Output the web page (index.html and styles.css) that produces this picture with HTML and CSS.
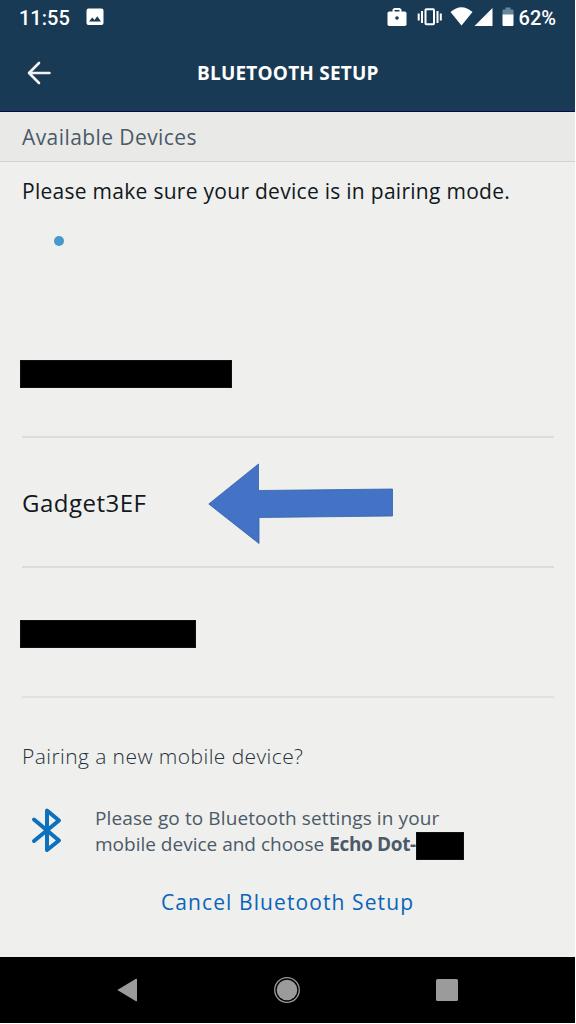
FILE: index.html
```html
<!DOCTYPE html>
<html lang="en">
<head>
<meta charset="utf-8">
<title>Bluetooth Setup</title>
<link rel="stylesheet" href="styles.css">
</head>
<body>
<div class="phone">
  <header class="header">
    <div class="status">
      <span class="clock">11:55</span>
      <svg class="photo" width="18" height="18" viewBox="0 0 18 18"><path fill="#fff" fill-rule="evenodd" d="M2.500.5h13q2 0 2 2v12.500q0 2-2 2h-13q-2 0-2-2V2.500q0-2 2-2zM3 13.500h12L11.300 8.300 8.500 12 6.200 9.600z"/></svg>
      <svg class="indicators" width="140" height="36" viewBox="378.5 0 140 36">
        <path class="stroke" d="M393 13V10l1-1h5l1 1v3"/>
        <rect x="387" y="11.500" width="19" height="14.500" rx="1.800"/>
        <circle cx="396.500" cy="18" r="1.800" fill="#183a54"/>
        <rect class="stroke" x="425" y="9.200" width="8.500" height="15" rx=".8"/>
        <path class="stroke" d="M421.500 11v12M437 11v12M418.200 13.500v7M440.300 13.500v7"/>
        <path d="M450 12q11-9.500 22 0L461 25.500z"/>
        <path d="M492 8v18h-18z"/>
        <path fill="#66869b" d="M502 15V10.500q0-1 1-1h2V7.500h5v2h2q1 0 1 1V15z"/>
        <path d="M502 14.500h11V25q0 1-1 1h-9q-1 0-1-1z"/>
      </svg>
      <span class="battery-text">62%</span>
    </div>
    <div class="titlebar">
      <svg class="back" width="24" height="24" viewBox="0 0 24 24"><path d="M22.500 12H2M12 2l-10 10 10 10"/></svg>
      <h1 class="title">BLUETOOTH SETUP</h1>
    </div>
  </header>
  <main class="content">
    <h2 class="section">Available Devices</h2>
    <p class="hint">Please make sure your device is in pairing mode.</p>
    <div class="loader"><span class="dot"></span></div>
    <div class="device"><span class="mask wide"></span></div>
    <div class="device"><span class="name">Gadget3EF</span>
      <svg class="arrow" width="186" height="82" viewBox="0 0 186 82"><path d="M.800 41 50.500 1v26.500L184.500 26v27L51 54.500V80.500z"/></svg>
    </div>
    <div class="device last"><span class="mask medium"></span></div>
    <p class="question">Pairing a new mobile device?</p>
    <div class="pairing">
      <svg class="bluetooth" width="32" height="46" viewBox="0 0 32 46"><path d="M3 12.500 28 33.500 16 43V3.500L28 13.500 3 34"/></svg>
      <p class="instruction"><span class="line">Please go to Bluetooth settings in your</span><span class="line second">mobile device and choose <b>Echo Dot-</b><span class="mask small"></span></span></p>
    </div>
    <a class="cancel">Cancel Bluetooth Setup</a>
  </main>
  <nav class="nav">
    <svg width="22" height="24" viewBox="0 0 22 24"><path d="M1.300 12 20 .800q1-.500 1 .500v21.400q0 1-1 .500z"/></svg>
    <svg width="28" height="28" viewBox="0 0 28 28"><circle cx="14" cy="14" r="10.300"/><circle class="ring" cx="14" cy="14" r="12.300"/></svg>
    <svg width="22" height="22" viewBox="0 0 22 22"><rect width="22" height="22" rx="1.500"/></svg>
  </nav>
</div>
</body>
</html>
```
FILE: styles.css
```css
* { box-sizing: border-box; }
body { margin: 0; background: #fff; font-family: "Open Sans", "Noto Sans", sans-serif; }
h1, h2, p { margin: 0; font-weight: 400; white-space: nowrap; }
svg { display: block; flex: none; }
.phone { width: 575px; height: 1023px; display: flex; flex-direction: column; }
.header { height: 112px; background: #183a54; border-bottom: 1px solid #060b48; color: #fff; }
.status { height: 36px; display: flex; align-items: center; padding: 0 19px; font: 500 20px Roboto, sans-serif; }
.photo { margin-left: 16px; margin-top: -2px; }
.indicators { margin-left: auto; fill: #fff; }
.indicators .stroke { fill: none; stroke: #fff; stroke-width: 2; }
.titlebar { height: 74px; display: flex; align-items: center; padding-left: 27px; }
.title { font-size: 19px; font-weight: 700; margin-left: 146px; letter-spacing: .2px; }
.back path { fill: none; stroke: #f4f2f2; stroke-width: 2.600; stroke-linecap: round; stroke-linejoin: round; }
.content { height: 845px; background: #efefed; color: #111820; }
.section { height: 50px; padding-left: 22px; background: #e9e9e8; border-bottom: 1px solid #cfd3d3; color: #4b5a68; font-size: 21px; line-height: 50px; letter-spacing: .42px; }
.hint { padding-left: 22px; font-size: 21px; line-height: 58px; height: 58px; letter-spacing: .28px; }
.loader { height: 88px; padding: 16px 0 0 54px; }
.dot { display: block; width: 10px; height: 10px; border-radius: 50%; background: #4798cc; }
.device { height: 130px; margin: 0 21px 0 22px; padding-top: 4px; border-bottom: 2px solid #dcdcdb; display: flex; align-items: center; }
.last { border-color: #e1e1e0; }
.mask { display: block; background: #000; height: 28px; margin-left: -2px; border: 1px solid #111; }
.wide { width: 212px; }
.medium { width: 176px; }
.name { font-size: 24px; width: 186px; letter-spacing: .5px; margin-top: -4px; }
.arrow path { fill: #4472c4; stroke: #2e65ad; stroke-width: .8; }
.question { padding-left: 22px; margin-top: 38px; height: 40px; line-height: 40px; font-size: 21px; font-weight: 300; color: #26313c; letter-spacing: .42px; }
.pairing { margin-top: 30px; padding-left: 31px; display: flex; gap: 32px; height: 54px; }
.bluetooth { margin-top: 1px; }
.bluetooth path { fill: none; stroke: #0d70bc; stroke-width: 4; stroke-linecap: round; stroke-linejoin: round; }
.instruction { color: #4b5a68; font-size: 19px; }
.line { display: flex; height: 26px; line-height: 25px; white-space: pre; letter-spacing: .11px; }
.second { letter-spacing: 0; line-height: 24px; }
.second b { letter-spacing: -.35px; }
.small { width: 48px; margin: 0; }
.cancel { display: block; text-align: center; margin-top: 27px; font-size: 21px; line-height: 30px; color: #0864bb; letter-spacing: 1.1px; }
.nav { height: 66px; background: #000; display: flex; align-items: center; padding-left: 116px; }
.nav svg { fill: #9b9b9b; }
.nav svg + svg { margin-left: 135px; }
.nav .ring { fill: none; stroke: #9b9b9b; stroke-width: 1.300; }
```
